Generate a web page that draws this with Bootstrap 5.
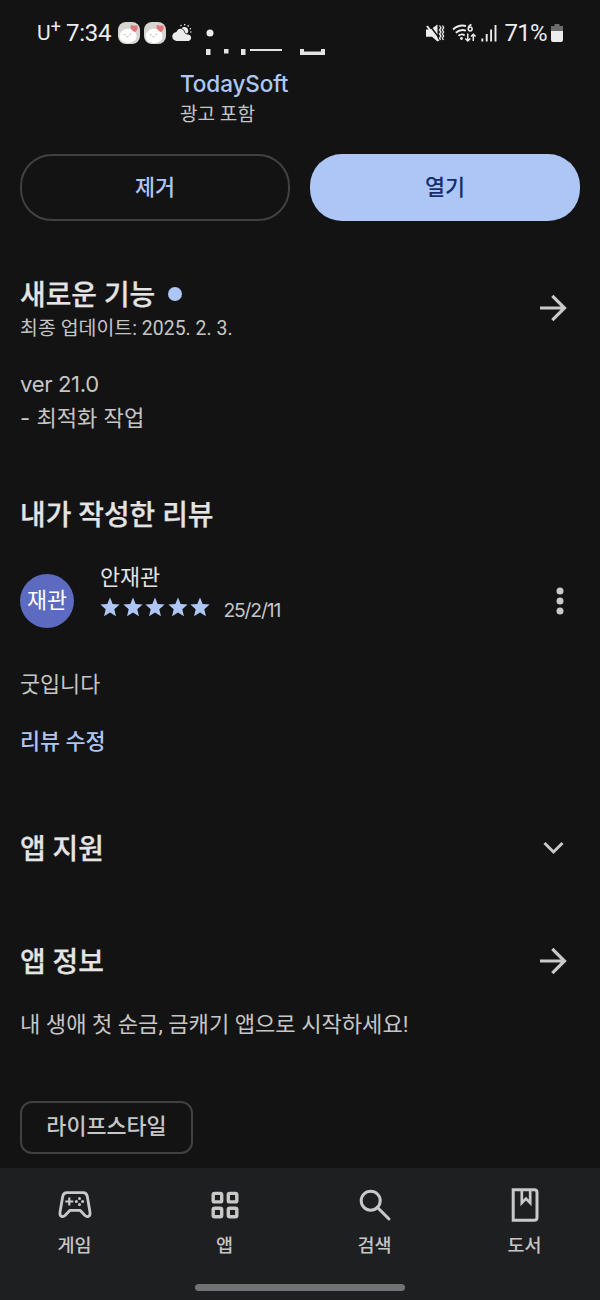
<!DOCTYPE html>
<html lang="ko" data-bs-theme="dark">
<head>
<meta charset="utf-8">
<meta name="viewport" content="width=device-width, initial-scale=1">
<title>TodaySoft</title>
<link href="https://cdn.jsdelivr.net/npm/bootstrap@5.3.0/dist/css/bootstrap.min.css" rel="stylesheet">
<style>
  body { background:#131313; color:#c6c6c6; font-family:Roboto,"Noto Sans CJK KR",sans-serif; font-size:22.1px; }
  .screen { width:600px; height:1300px; overflow:hidden; }
  .screen svg { display:block; flex:none; }
  .statusbar { height:49px; padding:17px 36px 0 37px; color:#ececec; }
  .statusbar > div { height:32px; }
  .clock { font-size:24px; line-height:32px; letter-spacing:-.25px; }
  .carrier { font-size:21px; line-height:32px; width:24px; }
  .carrier sup { font-size:18px; top:-.38em; }
  .dev { height:29px; line-height:29px; font-family:Inter,"Noto Sans CJK KR",sans-serif; font-size:22.5px; font-weight:500; color:#aec6f6; letter-spacing:-.1px; }
  .ads { height:32px; line-height:34px; font-size:19.1px; }
  .appmeta { padding-left:180px; }
  .pill { height:67px; border-radius:32px; font-size:21.8px; font-weight:500; padding:1px 0 0; }
  .pill-line { border:2px solid #414141; color:#aec6f6; }
  .pill-fill { background:#aec6f6; color:#142e6e; border:0; }
  .sect { height:40px; line-height:43px; font-size:27.9px; font-weight:500; color:#e4e4e4; margin:0; -webkit-text-stroke:.25px #e4e4e4; }
  .upd { height:27px; line-height:29px; font-size:19.4px; letter-spacing:.05px; }
  .newdot { width:14px; height:14px; background:#aec6f6; margin-left:13px; }
  .notes { line-height:34px; margin-top:26px; font-family:Inter,"Noto Sans CJK KR",sans-serif; }
  .ver { letter-spacing:-.35px; }
  .avatar { width:54px; height:54px; background:#5c6bc0; color:#fff; font-size:21.8px; padding-top:1px; }
  .person { height:27px; line-height:28px; font-size:21.8px; color:#e4e4e4; }
  .reviewer { height:73px; margin-top:30px; }
  .stars { height:33px; }
  .day { font-size:19.3px; line-height:33px; padding-top:6px; margin-left:12px; letter-spacing:-1.15px; font-family:Inter,sans-serif; }
  .txt { height:32px; line-height:33px; }
  .body-sm { font-size:21.8px; }
  .linkish { color:#aec6f6; font-weight:500; }
  .tag { width:173px; height:53px; border:2px solid #414141; border-radius:12px; font-size:21.8px; font-weight:500; margin-top:61px; }
  .tabs { height:132px; background:#1e1f21; }
  .tab { width:150px; padding-top:19px; font-size:18.5px; font-weight:500; }
  .tab span { line-height:28px; margin-top:9px; margin-left:-1px; }
  .handle { width:210px; height:7px; background:#717372; margin-bottom:9px; }
</style>
</head>
<body>
<svg width="0" height="0" class="position-absolute" aria-hidden="true">
  <symbol id="star" viewBox="0 0 24 24"><path fill="#aec6f6" d="M12 17.900 5.500 22l1.800-7.600L1.500 9.300l7.600-.6L12 1.500l2.900 7.200 7.600.6-5.800 5.100L18.500 22z"/></symbol>
  <symbol id="arrow" viewBox="0 0 28 28"><path fill="none" stroke="#c9c9c9" stroke-width="3.200" d="M1 14h24.500M13.300 1.800 25.500 14 13.300 26.200"/></symbol>
  <symbol id="face" viewBox="0 0 22 22">
    <rect width="22" height="22" rx="8" fill="#d8d4d0"/>
    <ellipse cx="10" cy="14" rx="8.600" ry="7.200" fill="#fff"/>
    <path d="M12.500 3.800c2-2 3.200.2 3.200.2s3.600-1.800 4 .8c.4 2-1 4.600-3 5.200-1.600-.6-5-3.400-4.200-6.200z" fill="#e0777b"/>
    <path d="M6 12.600h1.500M11.500 12.300H13M8.500 14.300l1 .6 1-.6" stroke="#999" stroke-width=".8" fill="none"/>
  </symbol>
</svg>
<main class="screen d-flex flex-column">
  <header class="statusbar d-flex justify-content-between">
    <div class="d-flex align-items-center">
      <span class="carrier">U<sup>+</sup></span>
      <span class="clock" style="margin-left:5px">7:34</span>
      <svg style="margin-left:7px" width="22" height="22"><use href="#face"/></svg>
      <svg style="margin-left:4px" width="22" height="22"><use href="#face"/></svg>
      <svg style="margin-left:6px" width="20" height="18" viewBox="0 0 20 18">
        <path d="M5 17a4.500 4.500 0 0 1-.5-9C6 3.500 11 4 12.200 8c1 2 2.300 2.500 4.300 2.500 3.500.5 3.500 6 0 6.500z" fill="#ececec"/>
        <path d="M9.500 4.300c2.500-2.600 7-.8 6.800 2.800-.1 1.200-.6 1.800-1.200 2.300-1.400.1-2-.9-2.300-1.900-.6-1.600-1.700-2.700-3.300-3.200z" fill="#ececec"/>
        <path d="M9 1.500v.1M12.700.6v.1M16.200 1.800v.1M18.400 4.700v.1M18.800 8v.1" stroke="#ececec" stroke-width="1.500" stroke-linecap="round"/>
      </svg>
      <svg style="margin-left:14px" width="8" height="8"><circle cx="4" cy="4" r="3.500" fill="#ececec"/></svg>
    </div>
    <div class="d-flex align-items-center">
      <svg width="19" height="18" viewBox="0 0 19 18">
        <path d="M0 5.500h4.500L11.500.5v17L6 12.800H0z" fill="#ececec"/>
        <path d="M2.800.3 14 15" stroke="#131313" stroke-width="1.500"/><path d="M1 2 12.500 17" stroke="#ececec" stroke-width="2"/>
        <path d="M13.500 1.500 15 4l-1.500 2L15 8l-1.500 2 1.500 2-1.500 2 1 2M16.500 1.500l1.200 2.500-1.400 2 1.400 2-1.400 2 1.400 2-1.400 2 1.200 2" fill="none" stroke="#ececec" stroke-width="1.300"/>
      </svg>
      <svg style="margin-left:7px" width="24" height="20" viewBox="0 0 24 20">
        <path d="M1 6.500Q7 1.200 14 3M3.800 9.800Q8.500 5.700 14 7.700M6.500 12.700q3.300-2.500 6.200-.3" fill="none" stroke="#ececec" stroke-width="1.900"/>
        <circle cx="9.500" cy="15.500" r="1.400" fill="#ececec"/>
        <path d="M19.500 1.500q-3.200 1-3.200 4" fill="none" stroke="#ececec" stroke-width="1.500"/><circle cx="18.200" cy="6" r="1.900" fill="none" stroke="#ececec" stroke-width="1.500"/>
        <path d="M15.800 10.500v7.500m-2.500-2.500 2.500 2.500 2.500-2.500M21.300 18v-6.800m-2.300 2.300 2.300-2.300 2.300 2.300" fill="none" stroke="#ececec" stroke-width="1.500"/>
      </svg>
      <svg style="margin-left:5px" width="16" height="18" viewBox="0 0 16 18"><path d="M1.300 17.500v-3M5.700 17.500V10M10.100 17.500v-12M14.500 17.500V1" stroke="#ececec" stroke-width="1.900"/></svg>
      <span class="clock" style="margin-left:8px;letter-spacing:-.7px">71%</span>
      <svg style="margin-left:4px;margin-right:1px" width="12" height="18" viewBox="0 0 12 18"><path d="M3.500 0h5v2H12v6H0V2h3.500z" fill="#6b6b6b"/><path d="M0 7h12v9a2 2 0 0 1-2 2H2a2 2 0 0 1-2-2z" fill="#ececec"/></svg>
    </div>
  </header>

  <section class="appmeta">
    <svg width="160" height="20" viewBox="180 49 160 20" fill="#e4e4e4"><path d="M206 49h4.500v6H206zM224 49h4.500v4.500H224zM241 49h4.500v6H241zM250 49h32v2h-32zM300 49h4v2.500h17V49h4v6h-25z"/></svg>
    <div class="dev">TodaySoft</div>
    <div class="ads">광고 포함</div>
  </section>

  <div class="d-flex mx-0" style="margin-top:24px;padding:0 20px;gap:20px">
    <button class="btn pill pill-line flex-fill w-50">제거</button>
    <button class="btn pill pill-fill flex-fill w-50">열기</button>
  </div>

  <section class="d-flex flex-column" style="padding:0 20px">
    <div class="d-flex justify-content-between align-items-center" style="margin-top:53px;padding-right:13px">
      <div>
        <div class="d-flex align-items-center"><h2 class="sect">새로운 기능</h2><i class="newdot rounded-circle"></i></div>
        <div class="upd">최종 업데이트: 2025. 2. 3.</div>
      </div>
      <svg width="28" height="28"><use href="#arrow"/></svg>
    </div>
    <div class="notes"><span class="ver">ver 21.0</span><br>- 최적화 작업</div>

    <h2 class="sect" style="margin-top:59px">내가 작성한 리뷰</h2>
    <div class="reviewer d-flex align-items-center">
      <div class="avatar rounded-circle d-flex align-items-center justify-content-center">재관</div>
      <div class="flex-grow-1 align-self-start" style="margin-left:26px">
        <div class="person">안재관</div>
        <div class="stars d-flex align-items-center">
          <div class="d-flex" style="gap:.6px;margin:-2px 0 0 -1px">
            <svg width="22" height="22"><use href="#star"/></svg><svg width="22" height="22"><use href="#star"/></svg><svg width="22" height="22"><use href="#star"/></svg><svg width="22" height="22"><use href="#star"/></svg><svg width="22" height="22"><use href="#star"/></svg>
          </div>
          <span class="day">25/2/11</span>
        </div>
      </div>
      <svg width="8" height="28" viewBox="0 0 8 28" style="margin-right:16px" fill="#c9c9c9"><circle cx="4" cy="4" r="3.500"/><circle cx="4" cy="14" r="3.500"/><circle cx="4" cy="24" r="3.500"/></svg>
    </div>
    <div class="txt body-sm" style="margin-top:31px">굿입니다</div>
    <div class="txt body-sm linkish" style="margin-top:25px">리뷰 수정</div>

    <div class="d-flex justify-content-between align-items-center" style="margin-top:71px;padding-right:16px">
      <h2 class="sect">앱 지원</h2>
      <svg width="21" height="14" viewBox="0 0 21 14"><path d="M1.500 2l9 9 9-9" fill="none" stroke="#c9c9c9" stroke-width="3"/></svg>
    </div>
    <div class="d-flex justify-content-between align-items-center" style="margin-top:73px;padding-right:13px">
      <h2 class="sect">앱 정보</h2>
      <svg width="28" height="28"><use href="#arrow"/></svg>
    </div>
    <div class="txt" style="margin-top:27px">내 생애 첫 순금, 금캐기 앱으로 시작하세요!</div>
    <div class="tag d-flex align-items-center justify-content-center">라이프스타일</div>
  </section>

  <nav class="tabs mt-auto d-flex flex-column align-items-center justify-content-between">
    <div class="d-flex">
      <div class="tab d-flex flex-column align-items-center">
        <svg width="36" height="36" viewBox="0 0 36 36" fill="none" stroke="#c9c9c9" stroke-linejoin="round">
          <path stroke-width="2.800" d="M10 5.700h16c2.500 0 3.900 1.500 4.300 3.800l2.700 15.800c.5 4-2.600 5.400-5 3.200L23 23.300H13l-5 5.200c-2.400 2.200-5.500.8-5-3.200L5.700 9.500C6.100 7.200 7.500 5.700 10 5.700z"/>
          <path stroke-width="2.200" d="M8.300 14.500h8M12.300 10.500v8"/><g fill="#c9c9c9" stroke="none"><circle cx="22.500" cy="11.500" r="1.500"/><circle cx="22.500" cy="17.500" r="1.500"/><circle cx="19.400" cy="14.500" r="1.500"/><circle cx="25.600" cy="14.500" r="1.500"/></g>
        </svg><span>게임</span>
      </div>
      <div class="tab d-flex flex-column align-items-center">
        <svg width="36" height="36" viewBox="0 0 36 36" fill="none" stroke="#c9c9c9" stroke-width="3.400"><rect x="6.200" y="6.400" width="8.500" height="8.500" rx="1.500"/><rect x="21.300" y="6.400" width="8.500" height="8.500" rx="1.500"/><rect x="6.200" y="21.200" width="8.500" height="8.500" rx="1.500"/><rect x="21.300" y="21.200" width="8.500" height="8.500" rx="1.500"/></svg><span>앱</span>
      </div>
      <div class="tab d-flex flex-column align-items-center">
        <svg width="36" height="36" viewBox="0 0 36 36" fill="none" stroke="#c9c9c9" stroke-width="3"><circle cx="13.700" cy="13.700" r="9.500"/><path stroke-linecap="round" d="M20.500 20.500 32 32"/></svg><span>검색</span>
      </div>
      <div class="tab d-flex flex-column align-items-center">
        <svg width="36" height="36" viewBox="0 0 36 36" fill="none" stroke="#c9c9c9" stroke-width="3"><path d="M6.200 2.700h21q2.800 0 2.800 2.800v25q0 2.800-2.800 2.800h-21z"/><path stroke-width="2.700" d="M14.800 3v13l4.200-4.400 4.200 4.400V3"/></svg><span>도서</span>
      </div>
    </div>
    <div class="handle rounded-pill"></div>
  </nav>
</main>
<script src="https://cdn.jsdelivr.net/npm/bootstrap@5.3.0/dist/js/bootstrap.bundle.min.js"></script>
</body>
</html>
